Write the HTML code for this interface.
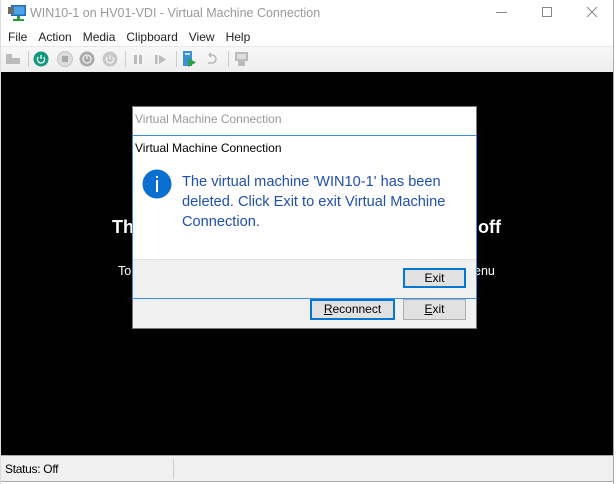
<!DOCTYPE html>
<html><head><meta charset="utf-8"><style>
*{margin:0;padding:0;box-sizing:border-box}
body{width:616px;height:484px;background:#fff;font-family:"Liberation Sans",sans-serif;font-size:12px;color:#000;position:relative;overflow:hidden}
.a{position:absolute}
.btn{position:absolute;background:#e1e1e1;border:1px solid #adadad;text-align:center;font-size:12px;line-height:18px}
.btn.f{border:2px solid #0078d7;line-height:16px}
</style></head><body>
<div class="a" style="left:613px;top:0;width:1px;height:484px;background:#aaa"></div>
<div class="a" style="left:0;top:0;width:1px;height:484px;background:#ddd"></div>
<svg class="a" style="left:8px;top:4px" width="20" height="18" viewBox="0 0 20 18">
<rect x="3" y="1" width="15" height="11" fill="#1e6fb8"/><rect x="4.5" y="2.5" width="12" height="8" fill="#4aa3e8"/>
<rect x="0" y="3" width="6" height="7" fill="#6b6b6b"/><rect x="9" y="12" width="3" height="3" fill="#2a9a3a"/><rect x="5" y="15" width="11" height="2" fill="#2a9a3a"/></svg>
<div class="a" style="left:30px;top:6px;font-size:12.5px;color:#999">WIN10-1 on HV01-VDI - Virtual Machine Connection</div>
<div class="a" style="left:496px;top:12px;width:11px;height:1px;background:#888"></div>
<div class="a" style="left:542px;top:7px;width:10px;height:10px;border:1px solid #888"></div>
<svg class="a" style="left:586px;top:6px" width="12" height="12"><path d="M1 1L11 11M11 1L1 11" stroke="#888" stroke-width="1"/></svg>
<div class="a" style="left:8px;top:30px;font-size:12px;color:#222">
<span style="margin-right:11px">File</span><span style="margin-right:11px">Action</span><span style="margin-right:11px">Media</span><span style="margin-right:11px">Clipboard</span><span style="margin-right:11px">View</span><span>Help</span></div>
<div class="a" style="left:1px;top:46px;width:612px;height:26px;background:linear-gradient(#f8f8f8,#eeeeee);border-top:1px solid #e8e8e8"></div>
<svg class="a" style="left:0;top:46px" width="260" height="26">
<g fill="#bbb"><rect x="6" y="8" width="6" height="10"/><rect x="11" y="12" width="9" height="6"/></g>
<g stroke="#ccc"><line x1="28.5" y1="5" x2="28.5" y2="21"/><line x1="125.5" y1="5" x2="125.5" y2="21"/><line x1="176.5" y1="5" x2="176.5" y2="21"/><line x1="228.5" y1="5" x2="228.5" y2="21"/></g>
<circle cx="41" cy="13" r="7.5" fill="#12987c"/><path d="M38.3 11a3.6 3.6 0 1 0 5.4 0M41 9v4" stroke="#fff" stroke-width="1.3" fill="none"/>
<circle cx="65" cy="13" r="7.5" fill="#ddd" stroke="#c4c4c4"/><rect x="62" y="10" width="6" height="6" fill="#aaa"/>
<circle cx="87" cy="13" r="7.5" fill="#aaa"/><circle cx="87" cy="13" r="4" fill="none" stroke="#eee" stroke-width="1.3"/><line x1="87" y1="10" x2="87" y2="13" stroke="#eee" stroke-width="1.3"/>
<circle cx="110" cy="13" r="7.5" fill="#c8c8c8"/><path d="M107.3 11a3.6 3.6 0 1 0 5.4 0M110 9v4" stroke="#f4f4f4" stroke-width="1.3" fill="none"/>
<rect x="134" y="9" width="3" height="9" fill="#bbb"/><rect x="139" y="9" width="3" height="9" fill="#bbb"/>
<rect x="155" y="9" width="2.5" height="9" fill="#bbb"/><path d="M159 9L166 13.5L159 18Z" fill="#bbb"/>
<rect x="183" y="5" width="9" height="15" fill="#3d8fd6"/><rect x="185" y="7" width="5" height="2" fill="#bfe0f8"/><path d="M188 12L196 16.5L188 21Z" fill="#2aa14a"/>
<path d="M209 9h3a4 4 0 0 1 0 8h-4M209 9l2-2M209 9l2 2" stroke="#bbb" stroke-width="1.6" fill="none"/>
<rect x="235" y="6" width="13" height="9" fill="#bbb"/><rect x="237" y="8" width="9" height="5" fill="#ddd"/><rect x="238" y="15" width="7" height="5" fill="#bbb"/>
</svg>
<div class="a" style="left:1px;top:72px;width:612px;height:383px;background:#000"></div>
<div class="a" style="left:112px;top:217px;color:#fff;font-weight:bold;font-size:18px">Th</div>
<div class="a" style="left:478px;top:217px;color:#fff;font-weight:bold;font-size:18px">off</div>
<div class="a" style="left:118px;top:264px;color:#fff;font-size:12.5px">To</div>
<div class="a" style="left:474px;top:264px;color:#fff;font-size:12.5px">enu</div>
<div class="a" style="left:132px;top:106px;width:345px;height:223px;background:#f0f0f0;border:1px solid #777"></div>
<div class="a" style="left:133px;top:107px;width:343px;height:29px;background:#fff"></div>
<div class="a" style="left:135px;top:112px;color:#999;font-size:12px">Virtual Machine Connection</div>
<div class="btn f" style="left:310px;top:299px;width:85px;height:21px"><u>R</u>econnect</div>
<div class="btn" style="left:403px;top:299px;width:63px;height:21px"><u>E</u>xit</div>
<div class="a" style="left:132px;top:135px;width:345px;height:164px;background:#fff;border:1px solid #3a8ee6"></div>
<div class="a" style="left:133px;top:259px;width:343px;height:39px;background:#f0f0f0;border-top:1px solid #e2e2e2"></div>
<div class="a" style="left:135px;top:141px;font-size:12px">Virtual Machine Connection</div>
<svg class="a" style="left:142px;top:169px" width="30" height="30"><circle cx="15" cy="15" r="14.5" fill="#0a6fd1"/><rect x="14" y="7" width="2" height="2" fill="#fff"/><rect x="14" y="11" width="2" height="12" fill="#fff"/></svg>
<div class="a" style="left:182px;top:172px;width:290px;color:#1f4fb4;font-size:14.6px;line-height:20px">The virtual machine 'WIN10-1' has been deleted. Click Exit to exit Virtual Machine Connection.</div>
<div class="btn f" style="left:403px;top:268px;width:63px;height:20px">Exit</div>
<div class="a" style="left:1px;top:455px;width:612px;height:27px;background:#f0f0f0;border-top:1px solid #aaa;border-bottom:1px solid #aaa"></div>
<div class="a" style="left:173px;top:459px;width:1px;height:20px;background:#ccc"></div>
<div class="a" style="left:5px;top:462px;font-size:12px;letter-spacing:-0.3px">Status: Off</div>
</body></html>
